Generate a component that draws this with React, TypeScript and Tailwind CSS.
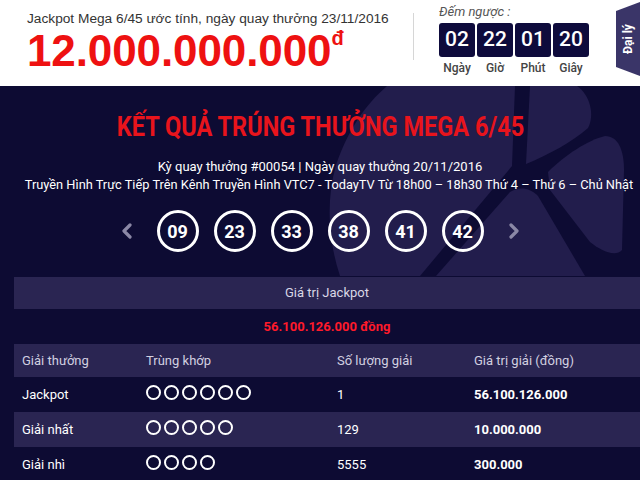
import React from 'react'

const balls = ['09', '23', '33', '38', '41', '42']

const countdown = [
  { value: '02', label: 'Ngày' },
  { value: '22', label: 'Giờ' },
  { value: '01', label: 'Phút' },
  { value: '20', label: 'Giây' },
]

const prizes = [
  { name: 'Jackpot', match: 6, count: '1', value: '56.100.126.000', alt: false },
  { name: 'Giải nhất', match: 5, count: '129', value: '10.000.000', alt: true },
  { name: 'Giải nhì', match: 4, count: '5555', value: '300.000', alt: false },
]

function Chevron({ dir }: { dir: 'left' | 'right' }) {
  return (
    <svg width="12" height="16" viewBox="0 0 12 16" className="text-[#8b88a6]">
      <path
        d={dir === 'left' ? 'M9 2 L3 8 L9 14' : 'M3 2 L9 8 L3 14'}
        fill="none"
        stroke="currentColor"
        strokeWidth="3.2"
        strokeLinecap="round"
        strokeLinejoin="round"
      />
    </svg>
  )
}

// faded star logo behind the results
function LogoBackdrop() {
  return (
    <svg className="absolute left-0 top-0" width="640" height="394" viewBox="0 0 640 394">
      <g transform="translate(0,-86)" fill="#221d4c">
        <path d="M387 86 L515 86 L512 166 L420 276 L340 276 C328 240 326 200 336 165 C348 130 365 105 387 86 Z" />
        <path d="M530 86 L577 86 C590 95 595 115 588 128 C572 142 548 155 526 164 Z" />
        <path d="M548 172 C565 155 588 140 605 136 C618 136 624 150 624 170 L622 250 C615 258 600 250 590 242 L550 190 Z" />
        <path d="M510 192 C520 186 530 188 538 196 L585 276 L436 276 Z" />
      </g>
    </svg>
  )
}

export default function App() {
  return (
    <div className="w-[640px] h-[480px] overflow-hidden bg-white font-['Roboto',sans-serif]">
      {/* Header */}
      <div className="relative flex h-[86px] bg-white">
        <div className="w-[413px] pl-[27px] pt-[10px]">
          <p className="whitespace-nowrap font-['Liberation_Sans',sans-serif] text-[13.7px] leading-[17px] text-[#333]">
            Jackpot Mega 6/45 ước tính, ngày quay thưởng 23/11/2016
          </p>
          <p className="mt-[1px] flex items-start font-['Liberation_Sans',sans-serif] font-bold text-[#ee1111]">
            <span className="text-[44px] leading-[46px] tracking-[-0.1px]">12.000.000.000</span>
            <span className="mt-[-1px] text-[20px] leading-[22px]">đ</span>
          </p>
        </div>
        <div className="mt-[13px] h-[47px] w-px bg-[#d6d6d6]" />
        <div className="ml-[25px] pt-[4px]">
          <p className="text-[13px] italic leading-[16px] text-[#555]">Đếm ngược :</p>
          <div className="mt-[3px] flex gap-[2px]">
            {countdown.map((c) => (
              <div key={c.label} className="flex w-[36px] flex-col items-center">
                <div className="flex h-[34px] w-[36px] items-center justify-center rounded-[3px] bg-[#0e0b3c] text-[21px] font-medium text-white">
                  {c.value}
                </div>
                <span className="mt-[4px] text-[12px] font-medium leading-[14px] text-[#444]">{c.label}</span>
              </div>
            ))}
          </div>
        </div>
        <div className="absolute right-0 top-[2px] flex h-[74px] w-[24px] items-center justify-center bg-[#3a3568] [clip-path:polygon(0_9px,100%_0,100%_100%,0_calc(100%-9px))]">
          <span className="-rotate-90 whitespace-nowrap text-[12px] font-bold text-white">Đại lý</span>
        </div>
      </div>

      {/* Results */}
      <div className="relative h-[394px] overflow-hidden bg-[#0d0b33]">
        <LogoBackdrop />

        <div className="relative flex flex-col items-center">
          <h1 className="mt-[24px] scale-x-[0.84] whitespace-nowrap text-[28px] font-bold leading-[33px] text-[#e8141c]">
            KẾT QUẢ TRÚNG THƯỞNG MEGA 6/45
          </h1>
          <p className="mt-[15px] text-[13px] leading-[18px] text-white">
            Kỳ quay thưởng #00054 | Ngày quay thưởng 20/11/2016
          </p>
          <p className="ml-[18px] whitespace-nowrap text-[12.8px] leading-[18px] text-white">
            Truyền Hình Trực Tiếp Trên Kênh Truyền Hình VTC7 - TodayTV Từ 18h00 – 18h30 Thứ 4 – Thứ 6 – Chủ Nhật
          </p>
          <div className="mt-[16px] flex items-center">
            <Chevron dir="left" />
            <div className="mx-[24px] flex gap-[15px]">
              {balls.map((b) => (
                <div
                  key={b}
                  className="flex h-[42px] w-[42px] items-center justify-center rounded-full border-[3px] border-white text-[18px] font-bold text-white"
                >
                  {b}
                </div>
              ))}
            </div>
            <Chevron dir="right" />
          </div>
        </div>

        <div className="relative ml-[14px] mt-[25px] text-[13px]">
          <div className="flex h-[32px] items-center justify-center bg-[#2a2552] text-[#d9d7e6]">Giá trị Jackpot</div>
          <div className="flex h-[35px] items-center justify-center bg-[#0d0b33] font-bold text-[#ff1a2a]">
            56.100.126.000 đồng
          </div>
          <div className="grid h-[33px] grid-cols-[124px_191px_137px_1fr] items-center bg-[#2a2552] text-[#d2d0e0]">
            <span className="pl-2">Giải thưởng</span>
            <span className="pl-2">Trùng khớp</span>
            <span className="pl-2">Số lượng giải</span>
            <span className="pl-2">Giá trị giải (đồng)</span>
          </div>
          {prizes.map((p) => (
            <div
              key={p.name}
              className={`grid h-[35px] grid-cols-[124px_191px_137px_1fr] items-center text-white ${
                p.alt ? 'bg-[#2a2552]' : 'bg-[#0d0b33]'
              }`}
            >
              <span className="pl-2">{p.name}</span>
              <span className="flex gap-[3px] pb-[4px] pl-2">
                {Array.from({ length: p.match }).map((_, i) => (
                  <span key={i} className="h-[15px] w-[15px] rounded-full border-2 border-white" />
                ))}
              </span>
              <span className="pl-2">{p.count}</span>
              <span className="pl-2 font-bold">{p.value}</span>
            </div>
          ))}
        </div>
      </div>
    </div>
  )
}
